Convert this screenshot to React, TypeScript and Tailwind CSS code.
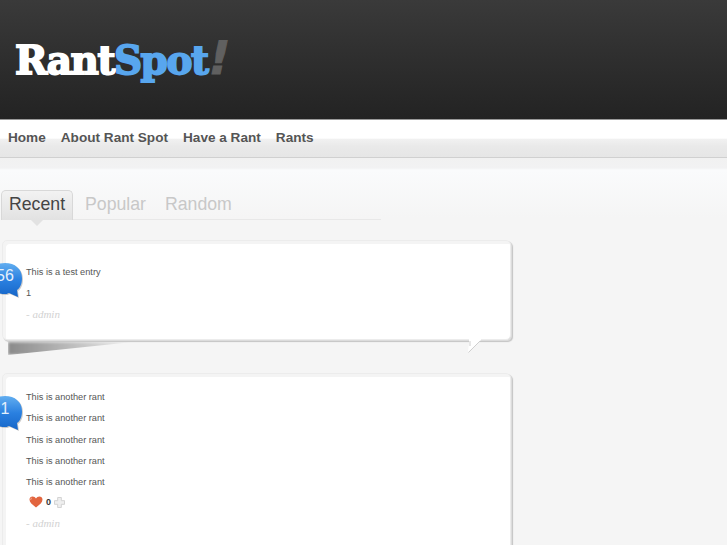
const sans = { fontFamily: '"Liberation Sans", Arial, sans-serif' };

function Bubble({ count }: { count: string }) {
  return (
    <div className="absolute left-[-14px] top-[22px] h-[38px] w-[34px]">
      <svg width="38" height="38" viewBox="-2 0 38 38" className="absolute left-[-2px] top-0">
        <defs>
          <linearGradient id="bubbleFill" x1="0" y1="0" x2="0" y2="1">
            <stop offset="0" stopColor="#62aef0" />
            <stop offset="0.5" stopColor="#2a80e0" />
            <stop offset="1" stopColor="#1766c8" />
          </linearGradient>
        </defs>
        <path
          d="M17 1C27 1 34 7 34 16C34 22 32 26 29 28L30 35L21 31C19 32 18 32 17 32C7 32 -1 25 -1 16C-1 7 7 1 17 1Z"
          fill="#555"
          opacity="0.3"
          transform="translate(1 1)"
        />
        <path
          d="M17 1C27 1 34 7 34 16C34 22 32 26 29 28L30 35L21 31C19 32 18 32 17 32C7 32 -1 25 -1 16C-1 7 7 1 17 1Z"
          fill="url(#bubbleFill)"
        />
      </svg>
      <span
        className="absolute inset-x-0 top-[5px] text-center text-[16px] leading-[18px] text-[#e4f0fc]"
        style={sans}
      >
        {count}
      </span>
    </div>
  );
}

function Heart() {
  return (
    <svg width="14" height="12" viewBox="0 0 14 12">
      <path
        d="M7 11.500C3 8.500 .5 6.500 .5 3.600C.5 1.600 2 .5 3.600 .5C5 .5 6.300 1.300 7 2.500C7.700 1.300 9 .5 10.400 .5C12 .5 13.500 1.600 13.500 3.600C13.500 6.500 11 8.500 7 11.500Z"
        fill="#e2653f"
      />
      <path d="M3 2C2 2.200 1.600 3 1.800 4" stroke="#f5b09a" fill="none" />
    </svg>
  );
}

function Plus() {
  return (
    <svg width="11" height="11" viewBox="0 0 12 12">
      <path d="M4 .5H8V4H11.500V8H8V11.500H4V8H.5V4H4Z" fill="#efefef" stroke="#cfcfcf" />
    </svg>
  );
}

function Card({
  count,
  lines,
  rating,
  tall,
}: {
  count: string;
  lines: string[];
  rating?: boolean;
  tall?: boolean;
}) {
  return (
    <div className="relative ml-[2px] w-[509px]">
      <div
        className={`rounded-[5px] border border-[#ececec] bg-white pl-[23px] pr-4 shadow-[1px_1px_0_#dcdcdc,2px_2px_1px_#c4c4c4,inset_3px_3px_0_#f4f4f4] ${tall ? "h-[200px] pt-[18px]" : "h-[100px] pt-[26px]"}`}
      >
        {lines.map((line, i) => (
          <p key={i} className="mb-[11.25px] text-[9.2px] leading-[10px] text-[#555]" style={sans}>
            {line}
          </p>
        ))}
        {rating && (
          <div className="mb-[11.25px] ml-[3px] -mt-[1px] flex h-[10px] items-center gap-[3px]">
            <Heart />
            <span className="text-[9px] font-bold text-[#333]" style={sans}>
              0
            </span>
            <Plus />
          </div>
        )}
        <p
          className="-mt-[1px] text-[11px] leading-[10px] italic text-[#d2d2d2]"
          style={{ fontFamily: '"Liberation Serif", serif' }}
        >
          - admin
        </p>
      </div>
      <Bubble count={count} />
    </div>
  );
}

export default function App() {
  return (
    <div className="h-[545px] w-[727px] overflow-hidden bg-[#f5f5f5]" style={sans}>
      <header className="flex h-[119px] items-start bg-gradient-to-b from-[#3a3a3a] to-[#232323] pl-[15px] pt-[34px]">
        <div
          className="flex items-baseline text-[39px] leading-[48px] font-bold tracking-[-1.5px]"
          style={{ fontFamily: '"DejaVu Serif", serif', WebkitTextStroke: "1.8px currentColor" }}
        >
          <span className="text-white">Rant</span>
          <span className="text-[#58a6ee]">Spot</span>
          <span
            className="ml-[2px] inline-block -skew-x-12 text-[46px] text-[#606060]"
            style={{ fontFamily: '"DejaVu Sans", sans-serif', WebkitTextStroke: "1px #606060" }}
          >
            !
          </span>
        </div>
      </header>

      <nav className="h-[39px] border-t border-[#999] bg-[linear-gradient(#fff_0,#fff_48%,#f1f1f1_50%,#e9e9e9_70%,#e6e6e6_97%,#d0d0d0_97%)] pl-2">
        <ul className="flex h-[37px] items-center gap-[15px] text-[13.6px] font-bold text-[#555]">
          <li>Home</li>
          <li>About Rant Spot</li>
          <li>Have a Rant</li>
          <li>Rants</li>
        </ul>
      </nav>

      <main className="bg-[linear-gradient(#f1f1f1_0,#f2f2f3_10px,#fafbfc_12px,#f5f5f5_60px)] pt-[32px]">
        <div className="relative ml-[1px] flex h-[30px] w-[380px] border-b border-[#e8e8e8] text-[17.7px] leading-[26px]">
          <div className="relative h-[30px] w-[72px] rounded-t-[5px] border border-b-0 border-[#d8d8d8] bg-gradient-to-b from-[#f2f2f2] to-[#e2e2e2] pl-[7px] text-[#444]">
            Recent
            <span className="absolute left-[29px] top-[29px] size-0 border-x-[6px] border-t-[6px] border-x-transparent border-t-[#e2e2e2]" />
          </div>
          <div className="ml-[12px] pt-[1px] text-[#c8c8c8]">Popular</div>
          <div className="ml-[19px] pt-[1px] text-[#c8c8c8]">Random</div>
        </div>

        <div className="mt-[20px]">
          <div className="relative">
            <Card count="56" lines={["This is a test entry", "1"]} />
            <div className="absolute left-[8px] top-[102px] h-[13px] w-[125px] bg-gradient-to-r from-[#8a8a8a] to-[#f0f0f0] blur-[1.5px] [clip-path:polygon(0_0,100%_0,0_100%)]" />
            <svg width="18" height="16" viewBox="0 0 18 16" className="absolute left-[467px] top-[98px]">
              <path d="M2 1V5L1 14L14 2V1Z" fill="#fff" />
              <path d="M3 3V8M1.500 14.500L13 3" stroke="#cfcfcf" fill="none" />
            </svg>
          </div>
          <div className="mt-[33px]">
            <Card count="1" lines={Array(5).fill("This is another rant")} rating tall />
          </div>
        </div>
      </main>
    </div>
  );
}
